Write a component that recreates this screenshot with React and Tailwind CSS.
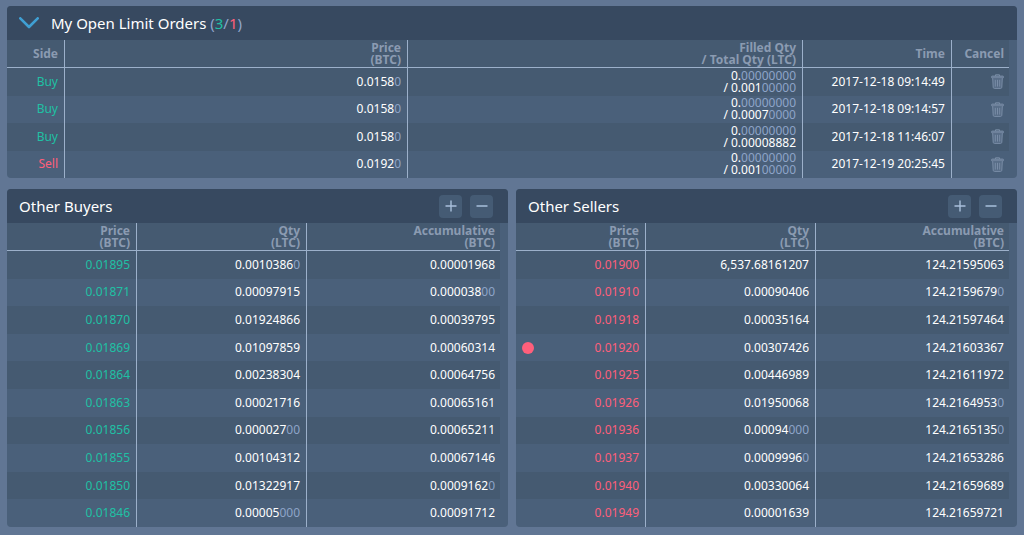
import clsx from 'clsx';

const openOrders = [
  { side: 'Buy', price: ['0.0158', '0'], filled: ['0.', '00000000'], total: ['0.001', '00000'], time: '2017-12-18 09:14:49' },
  { side: 'Buy', price: ['0.0158', '0'], filled: ['0.', '00000000'], total: ['0.0007', '0000'], time: '2017-12-18 09:14:57' },
  { side: 'Buy', price: ['0.0158', '0'], filled: ['0.', '00000000'], total: ['0.00008882', ''], time: '2017-12-18 11:46:07' },
  { side: 'Sell', price: ['0.0192', '0'], filled: ['0.', '00000000'], total: ['0.001', '00000'], time: '2017-12-19 20:25:45' },
];

const buyers = [
  { price: '0.01895', qty: ['0.0010386', '0'], acc: ['0.00001968', ''] },
  { price: '0.01871', qty: ['0.00097915', ''], acc: ['0.000038', '00'] },
  { price: '0.01870', qty: ['0.01924866', ''], acc: ['0.00039795', ''] },
  { price: '0.01869', qty: ['0.01097859', ''], acc: ['0.00060314', ''] },
  { price: '0.01864', qty: ['0.00238304', ''], acc: ['0.00064756', ''] },
  { price: '0.01863', qty: ['0.00021716', ''], acc: ['0.00065161', ''] },
  { price: '0.01856', qty: ['0.000027', '00'], acc: ['0.00065211', ''] },
  { price: '0.01855', qty: ['0.00104312', ''], acc: ['0.00067146', ''] },
  { price: '0.01850', qty: ['0.01322917', ''], acc: ['0.0009162', '0'] },
  { price: '0.01846', qty: ['0.00005', '000'], acc: ['0.00091712', ''] },
];

const sellers = [
  { price: '0.01900', qty: ['6,537.68161207', ''], acc: ['124.21595063', ''] },
  { price: '0.01910', qty: ['0.00090406', ''], acc: ['124.2159679', '0'] },
  { price: '0.01918', qty: ['0.00035164', ''], acc: ['124.21597464', ''] },
  { price: '0.01920', qty: ['0.00307426', ''], acc: ['124.21603367', ''], mine: true },
  { price: '0.01925', qty: ['0.00446989', ''], acc: ['124.21611972', ''] },
  { price: '0.01926', qty: ['0.01950068', ''], acc: ['124.2164953', '0'] },
  { price: '0.01936', qty: ['0.00094', '000'], acc: ['124.2165135', '0'] },
  { price: '0.01937', qty: ['0.0009996', '0'], acc: ['124.21653286', ''] },
  { price: '0.01940', qty: ['0.00330064', ''], acc: ['124.21659689', ''] },
  { price: '0.01949', qty: ['0.00001639', ''], acc: ['124.21659721', ''] },
];

// Trailing zeros are dimmed
function Amount({ value }) {
  return (
    <>
      {value[0]}
      {value[1] && <span className="text-[#8ea4c8]">{value[1]}</span>}
    </>
  );
}

function Th({ children, last, className }) {
  return (
    <th
      scope="col"
      className={clsx('border-b border-[#9cb0ca] pl-1 text-right align-middle font-bold text-[#8b9bb1]', last ? 'pr-[5px]' : 'border-r pr-[6px]', className)}
    >
      {children}
    </th>
  );
}

function Td({ children, last, className }) {
  return (
    <td className={clsx('pl-[6px] text-right align-middle whitespace-nowrap', last ? 'pr-[5px]' : 'border-r border-[#9cb0ca] pr-[6px]', className)}>
      {children}
    </td>
  );
}

function TrashIcon() {
  return (
    <svg className="h-[15px] w-[13px]" viewBox="0 0 13 15" fill="none" stroke="#7a8da7" strokeWidth="1">
      <path d="M4.5 2V.8h4V2" />
      <rect x=".6" y="2.1" width="11.8" height="1.9" rx=".5" fill="#62768f" />
      <path d="M1.7 4.2l.5 9.1q.1 1.1 1.2 1.1h6.2q1.1 0 1.2-1.1l.5-9.1" fill="#586d87" />
      <path d="M4.3 5.8v6.8M6.5 5.8v6.8M8.7 5.8v6.8" />
    </svg>
  );
}

function OpenOrders() {
  return (
    <section className="overflow-hidden rounded bg-[#4a607a]">
      <header className="flex h-[34px] items-center gap-3 bg-[#374960] pl-3">
        <button type="button" aria-label="Toggle open orders">
          <svg className="h-3 w-5" viewBox="0 0 20 12" fill="none" stroke="#3f9fd3" strokeWidth="2.6" strokeLinecap="round" strokeLinejoin="round">
            <path d="M1.3 1.3L10 10l8.7-8.7" />
          </svg>
        </button>
        <h2 className="text-[15px] text-white">
          My Open Limit Orders{' '}
          <span className="text-[#8fa5cb]">
            (<span className="text-[#20c0a4]">3</span>/<span className="text-[#ff5f7b]">1</span>)
          </span>
        </h2>
      </header>
      <div className="pr-2">
        <table className="h-[138px] w-full table-fixed border-separate border-spacing-0">
          <thead>
            <tr className="h-7 bg-[#455a71]">
              <Th className="w-[58px]">Side</Th>
              <Th className="w-[343px]">Price<br />(BTC)</Th>
              <Th>Filled Qty<br />/ Total Qty (LTC)</Th>
              <Th className="w-[149px]">Time</Th>
              <Th last className="w-[57px]">Cancel</Th>
            </tr>
          </thead>
          <tbody>
            {openOrders.map((order) => (
              <tr key={order.time} className="odd:bg-[#455a71]">
                <Td className={order.side === 'Buy' ? 'text-[#20c0a4]' : 'text-[#ff5f7b]'}>{order.side}</Td>
                <Td><Amount value={order.price} /></Td>
                <Td>
                  <Amount value={order.filled} />
                  <br />/ <Amount value={order.total} />
                </Td>
                <Td>{order.time}</Td>
                <Td last>
                  <button type="button" aria-label="Cancel order" className="ml-auto block">
                    <TrashIcon />
                  </button>
                </Td>
              </tr>
            ))}
          </tbody>
        </table>
      </div>
    </section>
  );
}

function ZoomButton({ label, children }) {
  return (
    <button type="button" aria-label={label} className="flex size-[23px] items-center justify-center rounded-sm bg-[#455b74]">
      <svg className="size-3" viewBox="0 0 12 12" stroke="#a9c0dc" strokeWidth="1.4">
        {children}
      </svg>
    </button>
  );
}

function OrderBook({ title, rows, priceColor }) {
  return (
    <section className="min-w-0 flex-1 overflow-hidden rounded bg-[#4a607a]">
      <header className="flex h-[34px] items-center justify-between bg-[#374960] pr-[15px] pl-3">
        <h2 className="text-[15px] text-white">{title}</h2>
        <div className="flex gap-2">
          <ZoomButton label="More">
            <path d="M.5 6h11M6 .5v11" />
          </ZoomButton>
          <ZoomButton label="Less">
            <path d="M.5 6h11" />
          </ZoomButton>
        </div>
      </header>
      <div className="pr-2">
        <table className="h-[304px] w-full table-fixed border-separate border-spacing-0">
          <thead>
            <tr className="h-7 bg-[#455a71]">
              <Th className="w-[130px]">Price<br />(BTC)</Th>
              <Th className="w-[170px]">Qty<br />(LTC)</Th>
              <Th last>Accumulative<br />(BTC)</Th>
            </tr>
          </thead>
          <tbody>
            {rows.map((row) => (
              <tr key={row.price} className="odd:bg-[#455a71]">
                <Td className={priceColor}>
                  <div className="flex items-center justify-between">
                    <span className={clsx('size-3 rounded-full', row.mine && 'bg-[#ff5f7b]')} />
                    {row.price}
                  </div>
                </Td>
                <Td><Amount value={row.qty} /></Td>
                <Td last><Amount value={row.acc} /></Td>
              </tr>
            ))}
          </tbody>
        </table>
      </div>
    </section>
  );
}

export default function App() {
  return (
    <main className="flex min-h-screen flex-col gap-[11px] bg-[#617694] px-[7px] pt-[6px] pb-2 font-['Noto_Sans',sans-serif] text-[12px] leading-[12px] text-white">
      <OpenOrders />
      <div className="flex gap-2">
        <OrderBook title="Other Buyers" rows={buyers} priceColor="text-[#20c0a4]" />
        <OrderBook title="Other Sellers" rows={sellers} priceColor="text-[#ff5f7b]" />
      </div>
    </main>
  );
}
